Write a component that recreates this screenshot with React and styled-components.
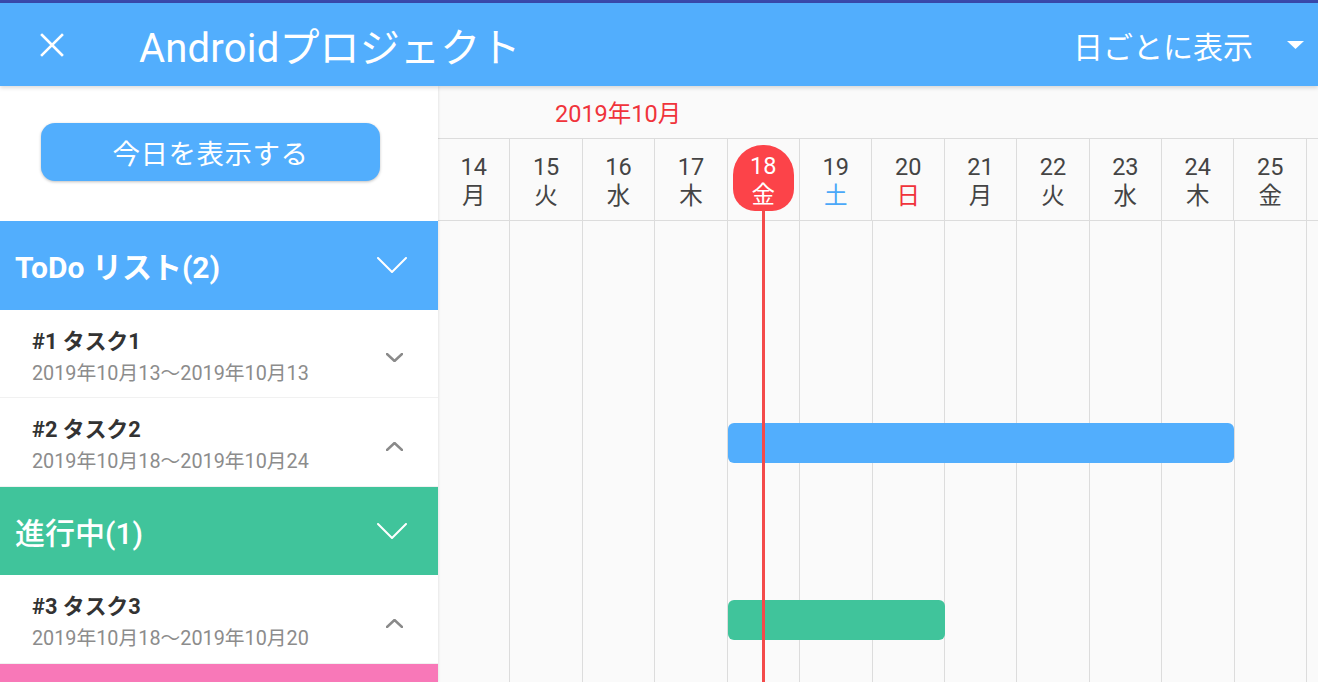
import React from 'react';
import styled, { createGlobalStyle } from 'styled-components';

const GlobalStyle = createGlobalStyle`
  html, body {
    margin: 0;
    padding: 0;
  }
  body {
    font-family: Roboto, "Noto Sans CJK JP", sans-serif;
    background: #fafafa;
    overflow: hidden;
  }
`;

const COL = 72.42;
const BLUE = '#52aefd';
const GREEN = '#40c49b';
const PINK = '#f878b8';
const RED = '#fc4349';

const days = [
  { d: 14, w: '月' },
  { d: 15, w: '火' },
  { d: 16, w: '水' },
  { d: 17, w: '木' },
  { d: 18, w: '金', today: true },
  { d: 19, w: '土', tone: 'sat' },
  { d: 20, w: '日', tone: 'sun' },
  { d: 21, w: '月' },
  { d: 22, w: '火' },
  { d: 23, w: '水' },
  { d: 24, w: '木' },
  { d: 25, w: '金' },
  { d: 26, w: '土', tone: 'sat', hidden: true },
];

const groups = [
  {
    label: 'ToDo リスト(2)',
    color: BLUE,
    bold: true,
    tasks: [
      { title: '#1 タスク1', range: '2019年10月13〜2019年10月13', open: false },
      { title: '#2 タスク2', range: '2019年10月18〜2019年10月24', open: true, bar: [5, 12] },
    ],
  },
  {
    label: '進行中(1)',
    color: GREEN,
    bold: false,
    tasks: [
      { title: '#3 タスク3', range: '2019年10月18〜2019年10月20', open: true, bar: [5, 8] },
    ],
  },
];

const Page = styled.div`
  height: 682px;
  display: flex;
  flex-direction: column;
  overflow: hidden;
`;

const StatusStrip = styled.div`
  height: 3px;
  background: #3949ab;
  flex-shrink: 0;
`;

const AppBar = styled.header`
  height: 83px;
  flex-shrink: 0;
  background: ${BLUE};
  color: #fff;
  display: flex;
  align-items: center;
  padding: 0 14px 0 40px;
  box-shadow: 0 2px 4px rgba(0, 0, 0, 0.14);
  position: relative;
  z-index: 3;
`;

const CloseIcon = styled.svg`
  width: 24px;
  height: 24px;
  margin-right: 75px;
  flex-shrink: 0;
`;

const Title = styled.h1`
  flex: 1;
  margin: 0;
  font-size: 40px;
  font-weight: 400;
  letter-spacing: 0.2px;
`;

const ViewSelect = styled.div`
  display: flex;
  align-items: center;
  gap: 34px;
  font-size: 30px;
`;

const Main = styled.div`
  flex: 1;
  display: flex;
  min-height: 0;
`;

const Sidebar = styled.aside`
  width: 438px;
  flex-shrink: 0;
  background: #fff;
  display: flex;
  flex-direction: column;
  position: relative;
  z-index: 2;
  box-shadow: 1px 0 2px rgba(0, 0, 0, 0.08);
`;

const TodayArea = styled.div`
  height: 135px;
  box-sizing: border-box;
  padding: 37px 0 0 41px;
  flex-shrink: 0;
`;

const TodayButton = styled.button`
  width: 339px;
  height: 58px;
  border: none;
  border-radius: 14px;
  background: ${BLUE};
  color: #fff;
  font-family: inherit;
  font-size: 27.5px;
  letter-spacing: 0.5px;
  box-shadow: 0 1px 3px rgba(0, 0, 0, 0.25);
`;

const GroupHeader = styled.div`
  height: 88.5px;
  flex-shrink: 0;
  box-sizing: border-box;
  background: ${(p) => p.$color};
  color: #fff;
  display: flex;
  align-items: center;
  justify-content: space-between;
  padding: 0 31px 0 15px;
  font-size: 30px;
  font-weight: ${(p) => (p.$bold ? 700 : 500)};
`;

const TaskRow = styled.div`
  height: 88.5px;
  flex-shrink: 0;
  box-sizing: border-box;
  display: flex;
  align-items: center;
  justify-content: space-between;
  padding: 9px 35px 0 32px;
  border-bottom: 1px solid #f1f1f1;
`;

const TaskText = styled.div`
  display: flex;
  flex-direction: column;
  gap: 2px;
`;

const TaskTitle = styled.div`
  font-size: 21.8px;
  font-weight: 700;
  color: #333;
  line-height: 30px;
`;

const TaskDate = styled.div`
  font-size: 19.8px;
  color: #8c8c8c;
  line-height: 30px;
`;

const Timeline = styled.section`
  flex: 1;
  position: relative;
  overflow: hidden;
  display: flex;
  flex-direction: column;
  background: #fafafa;
`;

const MonthRow = styled.div`
  height: 53px;
  flex-shrink: 0;
  box-sizing: border-box;
  display: flex;
  align-items: center;
  padding: 0 0 0 117px;
  color: #f0333b;
  font-size: 23.5px;
  border-bottom: 1px solid #dcdcdc;
`;

const DayRow = styled.div`
  height: 82px;
  flex-shrink: 0;
  box-sizing: border-box;
  display: flex;
  border-bottom: 1px solid #dcdcdc;
`;

const DayCell = styled.div`
  width: ${COL}px;
  flex-shrink: 0;
  box-sizing: border-box;
  border-right: 1px solid #dcdcdc;
  display: flex;
  justify-content: center;
  align-items: ${(p) => (p.$today ? 'flex-start' : 'center')};
  padding-top: ${(p) => (p.$today ? 0 : 4)}px;
`;

const DayLabel = styled.div`
  display: flex;
  flex-direction: column;
  align-items: center;
  font-size: 23.5px;
  line-height: 29px;
  color: #444;
`;

const TodayBadge = styled(DayLabel)`
  width: 61px;
  height: 66px;
  margin-top: 6px;
  padding-top: 7px;
  box-sizing: border-box;
  border-radius: 30px 30px 22px 22px;
  background: ${RED};
  color: #fff;
`;

const Weekday = styled.span`
  color: ${(p) => (p.$tone === 'sat' ? '#4aa8f8' : p.$tone === 'sun' ? '#f0333b' : 'inherit')};
`;

const Chart = styled.div`
  flex: 1;
  background: repeating-linear-gradient(
    to right,
    transparent 0,
    transparent ${COL - 1}px,
    #dcdcdc ${COL - 1}px,
    #dcdcdc ${COL}px
  );
`;

const ChartRow = styled.div`
  height: 88.5px;
  display: grid;
  grid-template-columns: repeat(13, ${COL}px);
  align-items: center;
`;

const Bar = styled.div`
  grid-column: ${(p) => `${p.$from} / ${p.$to}`};
  height: 40px;
  margin-top: 1px;
  border-radius: 6px;
  background: ${(p) => p.$color};
`;

const TodayLine = styled.div`
  position: absolute;
  left: 324px;
  top: 124px;
  bottom: 0;
  width: 3px;
  background: #f44a4a;
  z-index: 1;
`;

const Chevron = ({ up, big }) => {
  const w = big ? 30 : 17;
  const h = big ? 16 : 9;
  const pts = up ? `1,${h - 1} ${w / 2},1 ${w - 1},${h - 1}` : `1,1 ${w / 2},${h - 1} ${w - 1},1`;
  return (
    <svg width={w} height={h} viewBox={`0 0 ${w} ${h}`}>
      <polyline
        points={pts}
        fill="none"
        stroke={big ? '#fff' : '#8a8a8a'}
        strokeWidth={big ? 2 : 2.4}
        strokeLinecap="round"
        strokeLinejoin="round"
      />
    </svg>
  );
};

const App = () => {
  return (
    <>
      <GlobalStyle />
      <Page>
        <StatusStrip />
        <AppBar>
          <CloseIcon viewBox="0 0 24 24">
            <path d="M2 2 L22 22 M22 2 L2 22" stroke="#fff" strokeWidth="2.6" strokeLinecap="square" />
          </CloseIcon>
          <Title>Androidプロジェクト</Title>
          <ViewSelect>
            <span>日ごとに表示</span>
            <svg width="17" height="8" viewBox="0 0 17 8">
              <polygon points="0,0 17,0 8.5,8" fill="#fff" />
            </svg>
          </ViewSelect>
        </AppBar>
        <Main>
          <Sidebar>
            <TodayArea>
              <TodayButton>今日を表示する</TodayButton>
            </TodayArea>
            {groups.map((g) => (
              <React.Fragment key={g.label}>
                <GroupHeader $color={g.color} $bold={g.bold}>
                  <span>{g.label}</span>
                  <Chevron big />
                </GroupHeader>
                {g.tasks.map((t) => (
                  <TaskRow key={t.title}>
                    <TaskText>
                      <TaskTitle>{t.title}</TaskTitle>
                      <TaskDate>{t.range}</TaskDate>
                    </TaskText>
                    <Chevron up={t.open} />
                  </TaskRow>
                ))}
              </React.Fragment>
            ))}
            <GroupHeader $color={PINK} />
          </Sidebar>
          <Timeline>
            <MonthRow>2019年10月</MonthRow>
            <DayRow>
              {days.map((day) => {
                const Label = day.today ? TodayBadge : DayLabel;
                return (
                  <DayCell key={day.d} $today={day.today}>
                    {!day.hidden && (
                      <Label>
                        <span>{day.d}</span>
                        <Weekday $tone={day.tone}>{day.w}</Weekday>
                      </Label>
                    )}
                  </DayCell>
                );
              })}
            </DayRow>
            <Chart>
              {groups.map((g) => (
                <React.Fragment key={g.label}>
                  <ChartRow />
                  {g.tasks.map((t) => (
                    <ChartRow key={t.title}>
                      {t.bar && <Bar $from={t.bar[0]} $to={t.bar[1]} $color={g.color} />}
                    </ChartRow>
                  ))}
                </React.Fragment>
              ))}
            </Chart>
            <TodayLine />
          </Timeline>
        </Main>
      </Page>
    </>
  );
};

export default App;
